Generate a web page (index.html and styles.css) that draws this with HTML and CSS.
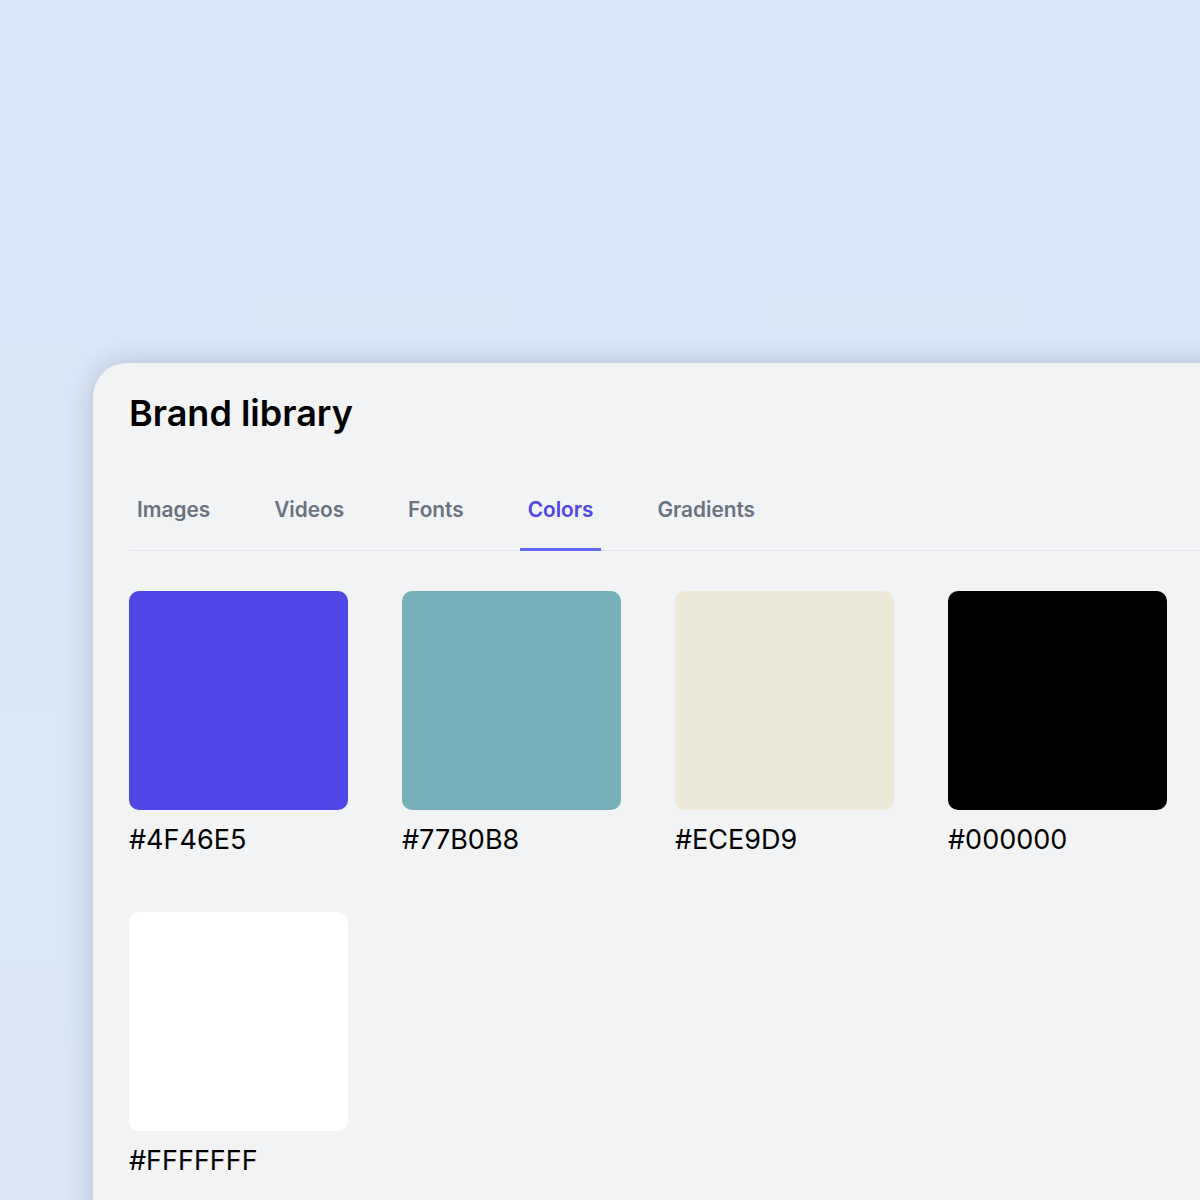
FILE: index.html
```html
<!DOCTYPE html>
<html lang="en">
<head>
<meta charset="utf-8">
<title>Brand library</title>
<link rel="stylesheet" href="styles.css">
</head>
<body>
<div class="stage">
  <section class="card">
    <h1 class="title">Brand library</h1>
    <nav class="tabs">
      <a class="tab">Images</a>
      <a class="tab">Videos</a>
      <a class="tab">Fonts</a>
      <a class="tab active">Colors</a>
      <a class="tab">Gradients</a>
    </nav>
    <div class="grid">
      <div class="item"><div class="swatch" style="background:#4F46E5"></div><div class="label">#4F46E5</div></div>
      <div class="item"><div class="swatch" style="background:#77B0B8"></div><div class="label">#77B0B8</div></div>
      <div class="item"><div class="swatch" style="background:#ECE9D9"></div><div class="label">#ECE9D9</div></div>
      <div class="item"><div class="swatch" style="background:#000000"></div><div class="label">#000000</div></div>
      <div class="item"><div class="swatch" style="background:#FFFFFF"></div><div class="label">#FFFFFFF</div></div>
    </div>
  </section>
</div>
</body>
</html>
```

FILE: styles.css
```css
html, body {
  margin: 0;
  padding: 0;
  height: 100%;
  overflow: hidden;
}
body {
  background: linear-gradient(180deg, #dbe8f7 0%, #dce9f7 60%, #dde9f5 100%);
  font-family: Inter, "Noto Sans", sans-serif;
}
.stage {
  padding: 363px 0 0 93px;
}
.card {
  width: 1180px;
  height: 900px;
  background: #f2f3f5;
  border-radius: 34px 0 0 0;
  box-shadow: 0 0 30px rgba(80, 100, 130, 0.32);
  padding: 30px 0 0 36px;
  box-sizing: border-box;
}
.title {
  margin: 0;
  font-size: 36px;
  line-height: 40px;
  font-weight: 600;
  color: #000;
}
.tabs {
  display: flex;
  gap: 48px;
  margin-top: 65px;
  border-bottom: 1px solid #e3e5e9;
}
.tab {
  display: block;
  padding: 0 8px 26px;
  font-size: 20.8px;
  line-height: 24px;
  font-weight: 600;
  color: #6b7280;
  border-bottom: 3px solid transparent;
  margin-bottom: -1px;
}
.tab.active {
  color: #4f46e5;
  border-bottom-color: #6366f1;
}
.grid {
  display: grid;
  grid-template-columns: repeat(4, 219px);
  column-gap: 54px;
  row-gap: 56px;
  margin-top: 40px;
}
.swatch {
  width: 219px;
  height: 219px;
  border-radius: 10px;
}
.label {
  margin-top: 14px;
  font-size: 27px;
  line-height: 32px;
  color: #000;
  font-weight: 400;
}
```
